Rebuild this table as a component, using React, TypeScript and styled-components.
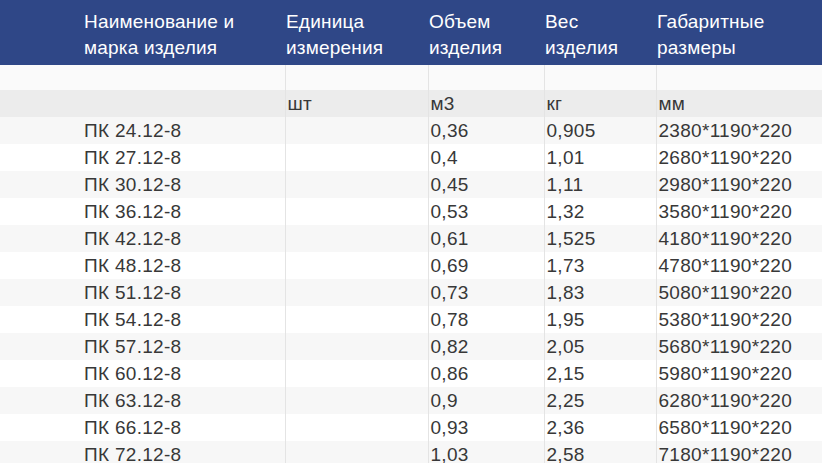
import React from 'react';
import styled, { createGlobalStyle } from 'styled-components';

const GlobalStyle = createGlobalStyle`
  html, body {
    margin: 0;
    padding: 0;
    background: #ffffff;
    overflow: hidden;
  }
  body {
    font-family: 'Liberation Sans', Arial, sans-serif;
  }
`;

const Table = styled.table`
  width: 822px;
  border-collapse: collapse;
  table-layout: fixed;
  font-size: 19px;
  letter-spacing: 0.3px;
  color: #383838;
`;

const HeadCell = styled.th<{ $first?: boolean }>`
  background: #2f4787;
  color: #ffffff;
  font-weight: normal;
  text-align: left;
  vertical-align: top;
  line-height: 26px;
  height: 65px;
  box-sizing: border-box;
  letter-spacing: 0.2px;
  padding: 9px 0 4px ${(p) => (p.$first ? '84px' : '1px')};
`;

const Row = styled.tr<{ $bg: string }>`
  background: ${(p) => p.$bg};
`;

const Cell = styled.td<{ $first?: boolean; $h: number }>`
  height: ${(p) => p.$h}px;
  line-height: ${(p) => p.$h}px;
  padding: 0 0 0 ${(p) => (p.$first ? '84px' : '2px')};
  box-sizing: border-box;
  border-left: ${(p) => (p.$first ? 'none' : '1px solid #e4e4e4')};
  white-space: nowrap;
  overflow: hidden;
`;

const heads = [
  ['Наименование и', 'марка изделия'],
  ['Единица', 'измерения'],
  ['Объем', 'изделия'],
  ['Вес', 'изделия'],
  ['Габаритные', 'размеры'],
];

const widths = [285, 143, 116, 112, 166];

const rows = [
  ['ПК 24.12-8', '0,36', '0,905', '2380*1190*220'],
  ['ПК 27.12-8', '0,4', '1,01', '2680*1190*220'],
  ['ПК 30.12-8', '0,45', '1,11', '2980*1190*220'],
  ['ПК 36.12-8', '0,53', '1,32', '3580*1190*220'],
  ['ПК 42.12-8', '0,61', '1,525', '4180*1190*220'],
  ['ПК 48.12-8', '0,69', '1,73', '4780*1190*220'],
  ['ПК 51.12-8', '0,73', '1,83', '5080*1190*220'],
  ['ПК 54.12-8', '0,78', '1,95', '5380*1190*220'],
  ['ПК 57.12-8', '0,82', '2,05', '5680*1190*220'],
  ['ПК 60.12-8', '0,86', '2,15', '5980*1190*220'],
  ['ПК 63.12-8', '0,9', '2,25', '6280*1190*220'],
  ['ПК 66.12-8', '0,93', '2,36', '6580*1190*220'],
  ['ПК 72.12-8', '1,03', '2,58', '7180*1190*220'],
];

export default function App() {
  return (
    <>
      <GlobalStyle />
      <Table>
        <colgroup>
          {widths.map((w, i) => (
            <col key={i} style={{ width: w }} />
          ))}
        </colgroup>
        <thead>
          <tr>
            {heads.map((h, i) => (
              <HeadCell key={i} $first={i === 0}>
                {h[0]}
                <br />
                {h[1]}
              </HeadCell>
            ))}
          </tr>
        </thead>
        <tbody>
          <Row $bg='#fafafa'>
            {widths.map((_, i) => (
              <Cell key={i} $first={i === 0} $h={25} />
            ))}
          </Row>
          <Row $bg='#ececec'>
            <Cell $first $h={27} />
            <Cell $h={27}>шт</Cell>
            <Cell $h={27}>м3</Cell>
            <Cell $h={27}>кг</Cell>
            <Cell $h={27}>мм</Cell>
          </Row>
          {rows.map((r, idx) => (
            <Row key={r[0]} $bg={idx % 2 === 0 ? '#f7f7f7' : '#ffffff'}>
              <Cell $first $h={27}>{r[0]}</Cell>
              <Cell $h={27} />
              <Cell $h={27}>{r[1]}</Cell>
              <Cell $h={27}>{r[2]}</Cell>
              <Cell $h={27}>{r[3]}</Cell>
            </Row>
          ))}
        </tbody>
      </Table>
    </>
  );
}
